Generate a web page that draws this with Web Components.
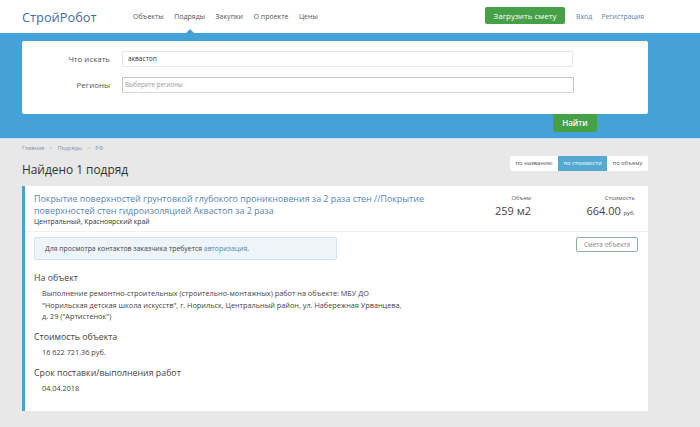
<!DOCTYPE html>
<html lang="ru">
<head>
<meta charset="utf-8">
<title>СтройРобот</title>
<style>
  html, body { margin: 0; padding: 0; }
  body {
    background: #e8e8e8;
    color: #333;
    font-family: "Open Sans", "Noto Sans", sans-serif;
  }
</style>
</head>
<body>
<site-header></site-header>
<search-band></search-band>
<main-area></main-area>

<script>
class SiteHeader extends HTMLElement {
  constructor() {
    super();
    this.html = this.attachShadow({ mode: 'open' });
  }
  connectedCallback() {
    this.html.innerHTML = `<style>
      :host { display: flex; align-items: center; height: 33px; background: #fff; padding-left: 22px; width: 700px; box-sizing: border-box; }
      .logo { font-size: 12.8px; color: #3f6f9f; width: 111px; }
      nav { display: flex; gap: 10.5px; flex: 1; }
      nav span { font-size: 7px; color: #555; position: relative; line-height: 33px; }
      .now::after {
        content: ''; position: absolute; left: 50%; bottom: 0; margin-left: -4px;
        border: 4px solid transparent; border-top: 0; border-bottom-color: #45a2d8;
      }
      .load {
        width: 80px; height: 17px; margin-top: -2px; box-sizing: border-box; background: #46a047; color: #fff;
        border-radius: 2px; font-size: 8px; line-height: 17px; text-align: center;
      }
      .auth { display: flex; justify-content: space-between; width: 68px; margin: 0 56px 0 11px; font-size: 6.9px; color: #5c7fa8; }
    </style>
    <div class="logo">СтройРобот</div>
    <nav><span>Объекты</span><span class="now">Подряды</span><span>Закупки</span><span>О проекте</span><span>Цены</span></nav>
    <div class="load">Загрузить смету</div>
    <div class="auth"><span>Вход</span><span>Регистрация</span></div>`;
  }
}

class SearchBand extends HTMLElement {
  constructor() {
    super();
    this.html = this.attachShadow({ mode: 'open' });
  }
  connectedCallback() {
    this.html.innerHTML = `<style>
      :host { display: block; height: 106px; box-sizing: border-box; background: #45a2d8; padding: 8px 52px 0 22px; border-bottom: 1px solid #bfe0ee; }
      .panel { background: #fff; border-radius: 2px; height: 73px; box-sizing: border-box; padding: 10px 0 0 0; }
      .row { display: flex; align-items: center; height: 16px; margin-bottom: 10px; }
      label { width: 88px; text-align: right; font-size: 7.9px; color: #555; margin-right: 12px; }
      .field { box-sizing: border-box; width: 451px; height: 16px; border: 1px solid #e8e8e8; padding-left: 5px; font-size: 6.6px; line-height: 14px; color: #333; }
      .field.sel { width: 452px; border: 1px solid #c4c4c4; border-bottom-color: #d8d8d8; padding-left: 2px; color: #999; font-size: 6.2px; }
      .go { display: flex; justify-content: flex-end; margin-right: 51px; }
      .go span { width: 44px; height: 18px; background: #46a047; color: #fff; border-radius: 0 0 3px 3px; font-size: 8px; font-weight: 600; line-height: 18px; text-align: center; }
    </style>
    <div class="panel">
      <div class="row"><label>Что искать</label><div class="field">аквастоп</div></div>
      <div class="row"><label>Регионы</label><div class="field sel">Выберите регионы</div></div>
    </div>
    <div class="go"><span>Найти</span></div>`;
  }
}

class SortGroup extends HTMLElement {
  constructor() {
    super();
    this.html = this.attachShadow({ mode: 'open' });
  }
  connectedCallback() {
    this.html.innerHTML = `<style>
      :host { display: flex; background: #fff; height: 15px; border-radius: 2px; font-size: 5.8px; line-height: 15px; color: #555; text-align: center; }
      span { display: block; }
      .a { width: 48px; } .b { width: 49px; background: #55a8d2; color: #fff; } .c { width: 41px; }
    </style>
    <span class="a">по названию</span><span class="b">по стоимости</span><span class="c">по объему</span>`;
  }
}

class InfoBlock extends HTMLElement {
  constructor() {
    super();
    this.html = this.attachShadow({ mode: 'open' });
  }
  connectedCallback() {
    this.html.innerHTML = `<style>
      :host { display: block; margin-bottom: 8.5px; }
      h3 { margin: 0; font-weight: 400; font-size: 8.8px; line-height: 13px; color: #444; }
      div { margin: 3px 0 0 8px; font-size: 7.3px; line-height: 11.5px; color: #444; }
    </style>
    <h3>${this.getAttribute('data-title')}</h3>
    <div><slot></slot></div>`;
  }
}

class ResultCard extends HTMLElement {
  constructor() {
    super();
    this.html = this.attachShadow({ mode: 'open' });
  }
  connectedCallback() {
    this.html.innerHTML = `<style>
      :host { display: block; height: 225px; box-sizing: border-box; background: #fff; border-left: 3px solid #45a2d8; }
      .top { display: flex; height: 46px; padding: 7px 13px 0 9px; box-sizing: border-box; border-bottom: 1px solid #f0f0f0; }
      .title { width: 440px; }
      a { display: block; font-size: 8.9px; line-height: 12px; color: #5585b5; }
      .place { font-size: 6.9px; line-height: 10px; color: #333; }
      .stat { text-align: right; font-size: 5.8px; line-height: 10px; color: #555; }
      .stat b { display: block; font-weight: 400; font-size: 11px; line-height: 15px; color: #444; }
      .stat small { font-size: 5.8px; }
      .vol { width: 57px; }
      .cost { margin-left: auto; width: 80px; }
      .mid { display: flex; justify-content: space-between; padding: 5px 10px 0 9px; }
      .note {
        box-sizing: border-box; width: 303px; height: 23px; background: #edf5fb; border: 1px solid #cfe2ee; border-radius: 2px;
        font-size: 6.9px; line-height: 21px; padding-left: 10px; color: #444;
      }
      .note span { color: #5585b5; }
      .btn {
        box-sizing: border-box; width: 62px; height: 15px; border: 1px solid #8fb39a; border-radius: 2px;
        font-size: 6.4px; line-height: 13px; text-align: center; color: #888;
      }
      .body { padding: 12px 0 0 9px; }
    </style>
    <div class="top">
      <div class="title">
        <a>Покрытие поверхностей грунтовкой глубокого проникновения за 2 раза стен //Покрытие поверхностей стен гидроизоляцией Аквастоп за 2 раза</a>
        <div class="place">Центральный, Красноярский край</div>
      </div>
      <div class="stat vol">Объем<b>259 м2</b></div>
      <div class="stat cost">Стоимость<b>664.00 <small>руб.</small></b></div>
    </div>
    <div class="mid">
      <div class="note">Для просмотра контактов заказчика требуется <span>авторизация</span>.</div>
      <div class="btn">Смета объекта</div>
    </div>
    <div class="body"><slot></slot></div>`;
  }
}

class MainArea extends HTMLElement {
  constructor() {
    super();
    this.html = this.attachShadow({ mode: 'open' });
  }
  connectedCallback() {
    this.html.innerHTML = `<style>
      :host { display: block; padding: 0 52px 0 22px; }
      .crumbs { display: flex; gap: 5px; padding-top: 5px; font-size: 5.6px; line-height: 9px; color: #7d93ad; }
      .crumbs i { font-style: normal; color: #aaa; }
      .bar { display: flex; justify-content: space-between; align-items: flex-start; margin-top: 3px; height: 30px; }
      h1 { margin: 5px 0 0; font-weight: 400; font-size: 11.9px; line-height: 17px; color: #333; }
    </style>
    <div class="crumbs"><span>Главная</span><i>&gt;</i><span>Подряды</span><i>&gt;</i><span>РФ</span></div>
    <div class="bar"><h1>Найдено 1 подряд</h1><sort-group></sort-group></div>
    <result-card>
      <info-block data-title="На объект">Выполнение ремонтно-строительных (строительно-монтажных) работ на объекте: МБУ ДО<br>"Норильская детская школа искусств", г. Норильск, Центральный район, ул. Набережная Урванцева,<br>д. 29 ("Артистенок")</info-block>
      <info-block data-title="Стоимость объекта">16 622 721.36 руб.</info-block>
      <info-block data-title="Срок поставки/выполнения работ">04.04.2018</info-block>
    </result-card>`;
  }
}

customElements.define('site-header', SiteHeader);
customElements.define('search-band', SearchBand);
customElements.define('sort-group', SortGroup);
customElements.define('info-block', InfoBlock);
customElements.define('result-card', ResultCard);
customElements.define('main-area', MainArea);
</script>
</body>
</html>
